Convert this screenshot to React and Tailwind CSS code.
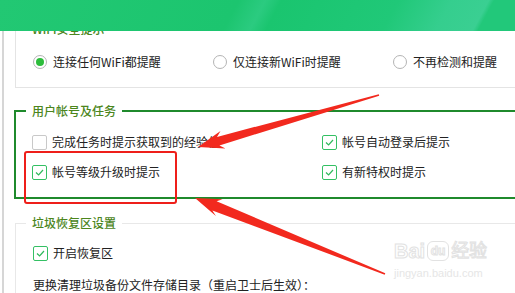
import React from "react";

const font = "font-['Noto_Sans_CJK_SC','Noto_Sans',sans-serif]";

function Radio({ checked, label }) {
  return (
    <label className="flex items-center h-[20px] w-[180px] shrink-0">
      <span className="w-[14px] h-[14px] rounded-full border border-[#b4b4b4] bg-white flex items-center justify-center">
        {checked && <span className="w-[8px] h-[8px] rounded-full bg-[#2cbc3b]" />}
      </span>
      <span className="ml-[6px] text-[12px] text-[#222] leading-[20px]">{label}</span>
    </label>
  );
}

function Check({ checked, label, className = "" }) {
  return (
    <label className={`flex items-center h-[20px] ${className}`}>
      <span
        className={`w-[15px] h-[15px] rounded-[2px] border bg-white flex items-center justify-center ${
          checked ? "border-[#34c064]" : "border-[#c9c9c9]"
        }`}
      >
        {checked && (
          <svg width="13" height="13" viewBox="0 0 13 13">
            <polyline points="3,6.5 5.6,9 10,4" fill="none" stroke="#2fb95c" strokeWidth="1.2" />
          </svg>
        )}
      </span>
      <span className="ml-[5px] text-[12px] text-[#222] leading-[20px]">{label}</span>
    </label>
  );
}

function Legend({ children }) {
  return (
    <legend className="ml-[10px] px-[6px] text-[12px] leading-[16px] text-[#4c861d] font-medium">
      {children}
    </legend>
  );
}

export default function App() {
  return (
    <div className={`relative w-[515px] h-[293px] overflow-hidden bg-white ${font}`}>
      <div className="relative z-10 h-[31px] bg-[linear-gradient(118deg,#22c873_0%,#1cc56f_45%,#2bcb80_50%,#1ac56f_53%,#20c878_75%,#35ce8e_85%,#3acf92_92%,#22c87a_93%,#22c87a_100%)]" />

      <div className="h-[262px] overflow-hidden">
        <div className="ml-[2px] border-l-2 border-[#d6d6d6] pl-[11px] -mt-[10px] w-[580px] h-[300px]">
          <fieldset className="border border-[#e4e4e4]">
            <Legend>WiFi安全提示</Legend>
            <div className="flex pl-[17px] pt-[15px] pb-[15px]">
              <Radio checked label="连接任何WiFi都提醒" />
              <Radio label="仅连接新WiFi时提醒" />
              <Radio label="不再检测和提醒" />
            </div>
          </fieldset>

          <fieldset className="mt-[15px] border-2 border-[#1f8a2c] -ml-px">
            <Legend>用户帐号及任务</Legend>
            <div className="pl-[16px] pt-[13px] pb-[15px] grid grid-cols-[290px_1fr] gap-y-[10px]">
              <Check label="完成任务时提示获取到的经验值" />
              <Check checked label="帐号自动登录后提示" />
              <Check checked label="帐号等级升级时提示" />
              <Check checked label="有新特权时提示" />
            </div>
          </fieldset>

          <fieldset className="mt-[16px] border border-[#e8e8e8]">
            <Legend>垃圾恢复区设置</Legend>
            <div className="pl-[17px] pt-[12px] flex flex-col gap-[12px]">
              <Check checked label="开启恢复区" />
              <div className="text-[12px] leading-[20px] text-[#222]">
                更换清理垃圾备份文件存储目录（重启卫士后生效）：
              </div>
            </div>
          </fieldset>
        </div>
      </div>

      {/* annotation: red box */}
      <div className="absolute left-[24px] top-[151px] w-[153px] h-[53px] border-2 border-[#ee1f1a] rounded-[3px] pointer-events-none" />

      {/* annotation: arrows */}
      <svg className="absolute left-0 top-0 pointer-events-none" width="515" height="293" viewBox="0 0 515 293">
        <polygon
          fill="#f2291e"
          points="198,147 225.5,148.5 219.4,145.5 379.2,95.8 378.8,94.2 217,136.9 220.5,131.1"
        />
        <polygon
          fill="#f2291e"
          points="195,198 222.5,199.2 216.6,201.2 385.3,273.3 384.7,274.7 212.4,210.4 215.9,216"
        />
      </svg>

      {/* watermark */}
      <div className="absolute left-[394px] top-[241px] pointer-events-none select-none">
        <div className="flex items-end gap-[2px] font-['Liberation_Sans','Noto_Sans_CJK_SC',sans-serif]">
          <span className="text-[20px] leading-[20px] font-bold text-transparent [-webkit-text-stroke:1px_#e2e2e2]">Bai</span>
          <span className="w-[22px] h-[20px] rounded-[6px] border border-[#e2e2e2] text-[12px] leading-[18px] text-center text-transparent [-webkit-text-stroke:1px_#e2e2e2] font-bold">du</span>
          <span className="text-[18px] leading-[20px] text-transparent [-webkit-text-stroke:1px_#e2e2e2]">经验</span>
        </div>
        <div className="mt-[6px] text-[11px] leading-[12px] text-[#e6e6e6] font-['Liberation_Sans',sans-serif]">
          jingyan.baidu.com
        </div>
      </div>
    </div>
  );
}
